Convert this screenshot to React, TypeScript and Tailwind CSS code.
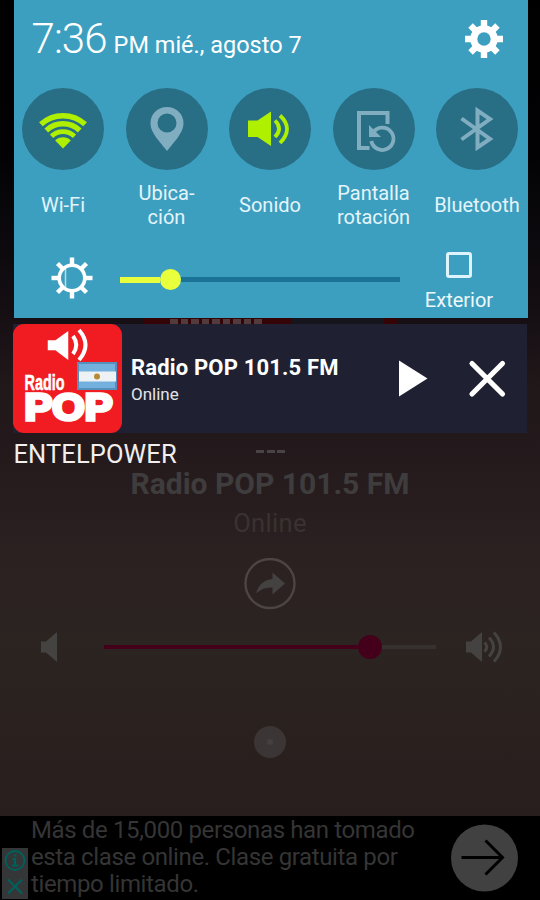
import type { ReactNode } from 'react';

// --- Icons ---
function GearIcon() {
  return (
    <svg width="38" height="38" viewBox="-19 -19 38 38" fill="#fff">
      {[0, 45, 90, 135].map((a) => (
        <path key={a} transform={`rotate(${a})`} d="M-3.2 -19h6.4v7h-6.4z M-3.2 12h6.4v7h-6.4z" />
      ))}
      <circle r="10.2" fill="none" stroke="#fff" strokeWidth="7" />
    </svg>
  );
}

function WifiIcon() {
  return (
    <svg width="50" height="38" viewBox="0 0 50 38" fill="none" stroke="#aef000" strokeWidth="5.500" className="mt-[3px]">
      <path d="M2.900 12.300A32.500 32.500 0 0 1 47.100 12.300" />
      <path d="M8.300 18.500A24.300 24.300 0 0 1 41.700 18.500" />
      <path d="M13.500 24.200A16.700 16.700 0 0 1 36.500 24.200" strokeWidth="4.800" />
      <path d="M17.200 28.500A11 11 0 0 1 32.800 28.500L25 36.500z" fill="#aef000" stroke="none" />
    </svg>
  );
}

function PinIcon() {
  return (
    <svg width="34" height="44" viewBox="0 0 34 44" fill="#80adc0" fillRule="evenodd">
      <path d="M17 0C7.5 0 .5 7 .5 16c0 6 3 10.500 6 15L17 44l10.500-13c3-4.500 6-9 6-15C33.500 7 26.500 0 17 0zM17 6.500a9.500 9.500 0 1 1 0 19 9.500 9.500 0 0 1 0-19z" />
    </svg>
  );
}

function SoundIcon() {
  return (
    <svg width="44" height="36" viewBox="0 0 44 36" fill="none" stroke="#aef000" strokeWidth="3.800">
      <path d="M0 9.500h9.500L23 .5v34.500L9.500 26H0z" fill="#aef000" stroke="none" />
      <path d="M27 9.500Q35 17.500 27 26" />
      <path d="M32 4.500Q46 17.500 32 32" />
    </svg>
  );
}

function RotateIcon() {
  return (
    <svg width="42" height="44" viewBox="0 0 42 44" fill="none" stroke="#80adc0" className="overflow-visible">
      <path d="M34.500 17V6H6v35h10.500" strokeWidth="4" />
      <path d="M20 25.500A11.200 11.200 0 1 1 18.300 34" strokeWidth="3.800" />
      <path d="M16 18v12h12z" fill="#80adc0" stroke="none" />
    </svg>
  );
}

function BluetoothIcon() {
  return (
    <svg width="34" height="48" viewBox="0 0 34 48" fill="none" stroke="#80adc0" strokeWidth="4">
      <path d="M1.500 13.500L30 34 17.500 42.500V5.500L30 14 1.500 34.500" />
    </svg>
  );
}

function BrightnessIcon() {
  return (
    <svg width="42" height="42" viewBox="-21 -21 42 42" fill="none" stroke="#fff">
      <circle r="12.800" strokeWidth="3.600" />
      <path d="M-6.500 -11V11" strokeWidth="1.500" opacity=".65" />
      {[0, 45, 90, 135, 180, 225, 270, 315].map((a) => (
        <path key={a} transform={`rotate(${a})`} d="M0 -20.500V-13" strokeWidth="4.400" />
      ))}
    </svg>
  );
}

function RadioLogo() {
  return (
    <svg width="109" height="109" viewBox="0 0 109 109" className="shrink-0">
      <rect width="109" height="109" rx="11" fill="#f01c22" />
      <path d="M35.500 17h7L54.500 8.500v26l-12-9h-7z" fill="#fff" stroke="#fff" strokeWidth="1.500" />
      <g fill="none" stroke="#fff" strokeWidth="4">
        <path d="M60 12q6.500 9 0 18" />
        <path d="M66 6q13 15 0 30" />
      </g>
      <rect x="64" y="38" width="40" height="28" fill="#568fbe" />
      <path d="M66 40h36v24H66z" fill="#73b0de" />
      <path d="M66 47.500h37v10H66z" fill="#eef2f4" />
      <circle cx="84" cy="52.500" r="3" fill="#b68a34" />
      <text x="11.500" y="66" fill="#fff" stroke="#fff" strokeWidth=".6" fontFamily="Liberation Sans" fontWeight="700" fontSize="22.500" textLength="40" lengthAdjust="spacingAndGlyphs">
        Radio
      </text>
      <text x="11.500" y="95.500" fill="#fff" stroke="#fff" strokeWidth="3.400" fontFamily="Liberation Sans" fontWeight="700" fontSize="36" textLength="88" lengthAdjust="spacingAndGlyphs">
        POP
      </text>
    </svg>
  );
}

type ToggleProps = { icon: ReactNode; label: string[] };

const TOGGLES: ToggleProps[] = [
  { icon: <WifiIcon />, label: ['Wi-Fi'] },
  { icon: <PinIcon />, label: ['Ubica-', 'ción'] },
  { icon: <SoundIcon />, label: ['Sonido'] },
  { icon: <RotateIcon />, label: ['Pantalla', 'rotación'] },
  { icon: <BluetoothIcon />, label: ['Bluetooth'] },
];

function QuickToggle({ icon, label }: ToggleProps) {
  return (
    <div className="flex w-[82px] flex-col items-center">
      <div className="flex size-[82px] items-center justify-center rounded-full bg-[#286f86]">{icon}</div>
      <div className="mt-[10px] flex h-[50px] flex-col items-center justify-center text-[20px] leading-[24px] whitespace-nowrap text-[#e4f4fb]">
        {label.map((line) => (
          <span key={line}>{line}</span>
        ))}
      </div>
    </div>
  );
}

function QuickPanel() {
  return (
    <section className="mr-[12.500px] ml-[13.500px] h-[318px] bg-[#3d9fbf] text-white">
      <header className="flex h-[88px] items-start justify-between pr-[25px] pl-[18px]">
        <div className="flex items-baseline pt-[15px] whitespace-nowrap">
          <span className="text-[42px] leading-[48px] font-light tracking-[-0.9px]">7:36</span>
          <span className="ml-[7px] text-[23.500px]">PM mié., agosto 7</span>
        </div>
        <div className="pt-[20px]">
          <GearIcon />
        </div>
      </header>
      <div className="flex justify-between pr-[9.500px] pl-[8.500px]">
        {TOGGLES.map((t) => (
          <QuickToggle key={t.label[0]} {...t} />
        ))}
      </div>
      <div className="mt-[20px] flex items-start">
        <div className="mt-[7px] ml-[37px]">
          <BrightnessIcon />
        </div>
        <div className="mt-[19px] ml-[27px] flex w-[280px] items-center">
          <div className="h-[6px] w-[40px] bg-[#eaff3c]" />
          <div className="size-[21px] rounded-full bg-[#eaff3c]" />
          <div className="h-[5px] flex-1 bg-[#1b7297]" />
        </div>
        <div className="flex flex-1 flex-col items-center pt-[2px] pr-[9px]">
          <div className="size-[26px] rounded-[3px] border-[3px] border-[#dff3fc]" />
          <span className="mt-[10px] text-[20px] leading-[24px] text-[#eef9fe]">Exterior</span>
        </div>
      </div>
    </section>
  );
}

// Sliver of the app's banner left visible between the panel and the notification
function BannerSliver() {
  return (
    <div className="flex h-[6px] pl-[143px]">
      <div className="flex w-[149px] gap-[3px] bg-[#350407] pt-[1px] pl-[27px]">
        {[0, 1, 2, 3, 4, 5, 6, 7, 8].map((i) => (
          <div key={i} className="h-[5px] w-[7.500px] bg-[#513b3c]" />
        ))}
      </div>
      <div className="w-[92px] bg-[#16151d]" />
      <div className="w-[13px] bg-[#350407]" />
    </div>
  );
}

function Notification() {
  return (
    <section className="mr-[13px] ml-[13px] flex h-[109px] bg-[#1f2132] text-white">
      <RadioLogo />
      <div className="w-[270px] pt-[30px] pl-[9px] whitespace-nowrap">
        <h2 className="text-[22px] leading-[28px] font-bold tracking-[0.17px]">Radio POP 101.5 FM</h2>
        <p className="text-[17px] leading-[25px] text-[#e4e4e8]">Online</p>
      </div>
      <svg width="116" height="40" viewBox="0 0 116 40" className="mt-[35px] ml-[6px]">
        <path d="M1 1.500v36L29.500 19.500z" fill="#fff" />
        <path d="M74 4.500L104.500 35M104.500 4.500L74 35" stroke="#fff" strokeWidth="5.200" strokeLinecap="round" />
      </svg>
    </section>
  );
}

function Player() {
  return (
    <section className="h-[383px]">
      <div className="flex h-[37px] items-start">
        <span className="w-[256px] pt-[6px] pl-[13.500px] text-[25.500px] leading-[31px] tracking-[0.1px] text-[#f2eeee]">ENTELPOWER</span>
        <div className="mt-[17px] flex gap-[2.500px]">
          <div className="h-[3px] w-[8px] bg-[#4a4345]" />
          <div className="h-[3px] w-[8px] bg-[#4a4345]" />
          <div className="h-[3px] w-[8px] bg-[#4a4345]" />
        </div>
      </div>
      <h1 className="text-center text-[30px] leading-[28px] font-bold text-[#3f3c3d]">Radio POP 101.5 FM</h1>
      <p className="mt-[10px] text-center text-[25.500px] leading-[30px] tracking-[0.3px] text-[#3a3231]">Online</p>
      <div className="mt-[20px] flex justify-center">
        <svg width="52" height="52" viewBox="0 0 52 52">
          <circle cx="26" cy="25.500" r="24.500" fill="none" stroke="#4c4544" strokeWidth="2.400" />
          <path d="M12 35.500C14.500 26.500 20.500 21.500 28.500 21v-6.500L41 25.500 28.500 36.500v-7C21 29.500 17 31.500 12 35.500z" fill="#444241" />
        </svg>
      </div>
      <div className="mt-[16px] flex h-[42px] items-center pl-[41px]">
        <svg width="16" height="32" viewBox="0 0 16 32" fill="#454242">
          <path d="M0 10.500h5L16 1v30L5 21.500H0z" />
        </svg>
        <div className="ml-[47px] flex w-[332px] items-center">
          <div className="h-[4px] w-[254px] bg-[#44001b]" />
          <div className="size-[24px] rounded-full bg-[#44001b]" />
          <div className="h-[4px] flex-1 bg-[#373030]" />
        </div>
        <svg width="38" height="32" viewBox="0 0 38 32" className="ml-[30px]" fill="none" stroke="#454242" strokeWidth="3">
          <path d="M0 10.500h5L16 1v30L5 21.500H0z" fill="#454242" stroke="none" />
          <path d="M18.500 11.500q4.500 4.500 0 9" />
          <path d="M23 6.500q9 9.500 0 19" />
          <path d="M28 1.500q13 14.500 0 29" />
        </svg>
      </div>
      <div className="mt-[58px] flex justify-center">
        <div className="flex size-[32px] items-center justify-center rounded-full bg-[#3b3635]">
          <div className="size-[6px] rounded-full bg-[#45403f]" />
        </div>
      </div>
    </section>
  );
}

function AdBanner() {
  return (
    <section className="flex h-[84px] bg-black">
      <svg width="26" height="51" viewBox="0 0 26 51" className="mt-[32px] ml-[2px] shrink-0" fill="none" stroke="#00605c" strokeWidth="1.800">
        <rect width="26" height="51" fill="#343637" stroke="none" />
        <circle cx="13" cy="12.500" r="9.500" />
        <path d="M11.800 7.500h2.600M10.500 11.200h2.500v6.300M10 17.500h6.500" strokeWidth="2.200" />
        <path d="M6 31.500l14 14M20 31.500l-14 14" strokeWidth="2.200" />
      </svg>
      <p className="ml-[3px] w-[419px] pt-[1px] text-[24px] leading-[27px] tracking-[-0.37px] whitespace-nowrap text-[#353535]">
        Más de 15,000 personas han tomado
        <br />
        esta clase online. Clase gratuita por
        <br />
        tiempo limitado.
      </p>
      <svg width="68" height="68" viewBox="0 0 68 68" className="mt-[8px] shrink-0">
        <circle cx="34.500" cy="34" r="33.500" fill="#414141" />
        <path d="M11.500 33.500h40M35.500 16.500l17 17-17 17" fill="none" stroke="#000" strokeWidth="3" />
      </svg>
    </section>
  );
}

// --- App Root Component ---
export default function App() {
  return (
    <main className="h-[900px] w-[540px] overflow-hidden bg-[linear-gradient(180deg,#000_0px,#020204_150px,#0b090d_240px,#160f14_320px,#211819_390px,#23191c_440px,#2b2121_560px,#2c2421_640px,#2a211f_740px,#271e1d_816px)] font-['Roboto',sans-serif]">
      <QuickPanel />
      <BannerSliver />
      <Notification />
      <Player />
      <AdBanner />
    </main>
  );
}
